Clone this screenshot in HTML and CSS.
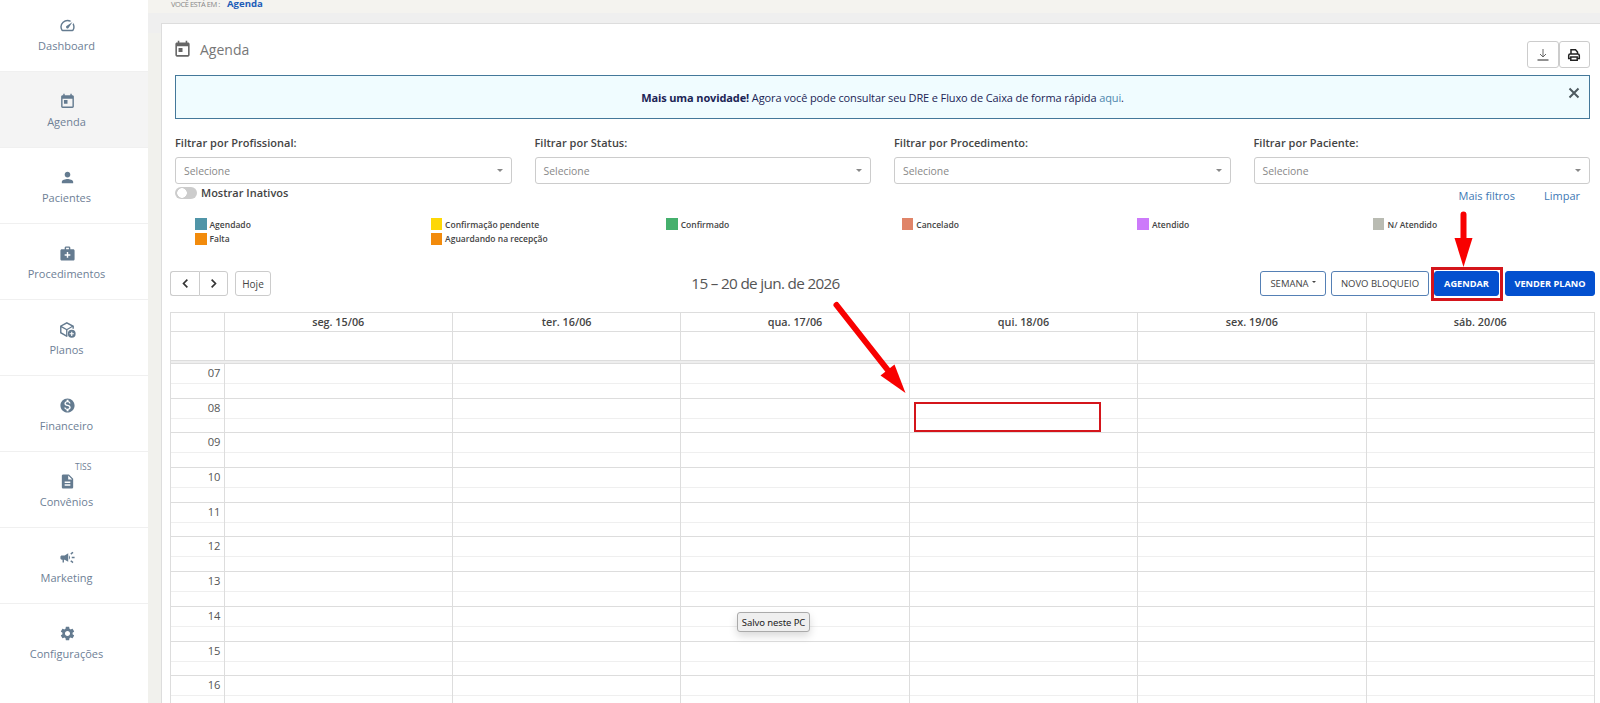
FILE: index.html
```
<!DOCTYPE html>
<html lang="pt-BR">
<head>
    <meta charset="UTF-8">
    <meta name="viewport" content="width=device-width, initial-scale=1.0">
    <title>Agenda</title>
    <link rel="stylesheet" href="styles.css">
</head>
<body>
<nav class="sidebar">
    <a class="nav-item">
        <svg viewBox="0 0 24 24"><path d="M20.38 8.57l-1.23 1.85a8 8 0 0 1-.22 7.58H5.07A8 8 0 0 1 15.58 6.85l1.85-1.23A10 10 0 0 0 3.35 19a2 2 0 0 0 1.72 1h13.85a2 2 0 0 0 1.74-1 10 10 0 0 0-.27-10.44zm-9.79 6.84a2 2 0 0 0 2.83 0l5.66-8.49-8.49 5.66a2 2 0 0 0 0 2.83z"/></svg>
        <span>Dashboard</span>
    </a>
    <a class="nav-item active">
        <svg viewBox="0 0 24 24"><path d="M19 3h-1V1h-2v2H8V1H6v2H5c-1.1 0-2 .9-2 2v14c0 1.1.9 2 2 2h14c1.1 0 2-.9 2-2V5c0-1.1-.9-2-2-2zm0 16H5V8h14v11zM7 10h5v5H7z"/></svg>
        <span>Agenda</span>
    </a>
    <a class="nav-item">
        <svg viewBox="0 0 24 24"><path d="M12 12c2.21 0 4-1.79 4-4s-1.79-4-4-4-4 1.79-4 4 1.79 4 4 4zm0 2c-2.67 0-8 1.34-8 4v2h16v-2c0-2.66-5.33-4-8-4z"/></svg>
        <span>Pacientes</span>
    </a>
    <a class="nav-item">
        <svg viewBox="0 0 24 24"><path d="M20 6h-4V4c0-1.1-.9-2-2-2h-4c-1.1 0-2 .9-2 2v2H4c-1.1 0-2 .9-2 2v12c0 1.1.9 2 2 2h16c1.1 0 2-.9 2-2V8c0-1.1-.9-2-2-2zM10 4h4v2h-4V4zm6 11h-3v3h-2v-3H8v-2h3v-3h2v3h3v2z"/></svg>
        <span>Procedimentos</span>
    </a>
    <a class="nav-item">
        <svg viewBox="0 0 24 24"><path d="M11 1.5 1.5 6.8v10.4L11 22.5l1-.6v-2.3l-.1.1V12.600L19 8.600V11h2V6.800zM11 3.800 17.700 7.500 11 11.200 4.200 7.500zM3.500 9.200l6.500 3.600v6.800L3.500 16z"/><path fill-rule="evenodd" d="M18 12.500a5.500 5.500 0 1 0 0 11 5.500 5.500 0 0 0 0-11zm-.8 2.500h1.600v2.200H21v1.600h-2.200V21h-1.600v-2.200H15v-1.600h2.200z"/></svg>
        <span>Planos</span>
    </a>
    <a class="nav-item">
        <svg viewBox="0 0 24 24"><path d="M12 2C6.480 2 2 6.480 2 12s4.480 10 10 10 10-4.480 10-10S17.520 2 12 2zm1.410 16.090V20h-2.670v-1.930c-1.710-.36-3.160-1.460-3.270-3.400h1.960c.1 1.050.82 1.870 2.650 1.870 1.960 0 2.400-.98 2.400-1.590 0-.83-.44-1.610-2.670-2.140-2.480-.6-4.180-1.620-4.180-3.670 0-1.720 1.390-2.840 3.110-3.210V4h2.670v1.950c1.860.45 2.790 1.860 2.850 3.390H14.300c-.05-1.110-.64-1.870-2.220-1.870-1.500 0-2.400.68-2.400 1.640 0 .84.65 1.390 2.670 1.910s4.180 1.390 4.180 3.910c-.01 1.830-1.380 2.830-3.120 3.160z"/></svg>
        <span>Financeiro</span>
    </a>
    <a class="nav-item">
        <small class="tiss">TISS</small>
        <svg viewBox="0 0 24 24"><path d="M14 2H6c-1.100 0-2 .9-2 2v16c0 1.100.9 2 2 2h12c1.100 0 2-.9 2-2V8l-6-6zm2 16H8v-2h8v2zm0-4H8v-2h8v2zm-3-5V3.500L18.500 9H13z"/></svg>
        <span>Convênios</span>
    </a>
    <a class="nav-item">
        <svg viewBox="0 0 24 24"><path d="M18 11v2h4v-2h-4zm-2 6.610c.96.71 2.210 1.650 3.200 2.390.4-.53.8-1.070 1.200-1.600-.99-.74-2.240-1.680-3.200-2.400-.4.540-.8 1.080-1.200 1.610zM20.400 5.600c-.4-.53-.8-1.070-1.200-1.600-.99.740-2.240 1.680-3.200 2.400.4.530.8 1.070 1.200 1.600.96-.72 2.210-1.650 3.200-2.400zM4 9c-1.100 0-2 .9-2 2v2c0 1.100.9 2 2 2h1v4h2v-4h1l5 3V6L8 9H4zm11.500 3c0-1.330-.58-2.530-1.500-3.350v6.690c.92-.81 1.500-2.010 1.500-3.340z"/></svg>
        <span>Marketing</span>
    </a>
    <a class="nav-item">
        <svg viewBox="0 0 24 24"><path d="M19.140 12.940c.04-.3.060-.61.060-.94 0-.32-.02-.64-.07-.94l2.030-1.580c.18-.14.230-.41.120-.61l-1.920-3.320c-.12-.22-.37-.29-.59-.22l-2.390.96c-.5-.38-1.030-.7-1.620-.94l-.36-2.540c-.04-.24-.24-.41-.48-.41h-3.840c-.24 0-.43.17-.47.41l-.36 2.540c-.59.24-1.130.57-1.620.94l-2.390-.96c-.22-.08-.47 0-.59.22L2.740 8.870c-.12.21-.08.47.12.61l2.030 1.580c-.05.3-.09.63-.09.94s.02.64.07.94l-2.030 1.580c-.18.14-.23.41-.12.61l1.920 3.320c.12.22.37.29.59.22l2.390-.96c.5.38 1.030.7 1.620.94l.36 2.540c.05.24.24.41.48.41h3.840c.24 0 .44-.17.47-.41l.36-2.540c.59-.24 1.130-.56 1.620-.94l2.390.96c.22.08.47 0 .59-.22l1.920-3.320c.12-.22.070-.47-.12-.61l-2.010-1.580zM12 15.600c-1.980 0-3.600-1.620-3.600-3.600s1.620-3.600 3.600-3.600 3.600 1.620 3.600 3.600-1.620 3.600-3.600 3.600z"/></svg>
        <span>Configurações</span>
    </a>
</nav>

<main class="content">
    <div class="breadcrumb"><span>VOCÊ ESTÁ EM :</span><a>Agenda</a></div>

    <section class="panel">
        <header class="panel-header">
            <svg class="title-icon" viewBox="0 0 24 24"><path d="M19 3h-1V1h-2v2H8V1H6v2H5c-1.100 0-2 .9-2 2v14c0 1.100.9 2 2 2h14c1.100 0 2-.9 2-2V5c0-1.100-.9-2-2-2zm0 16H5V8h14v11zM7 10h5v5H7z"/></svg>
            <h1>Agenda</h1>
            <div class="header-actions">
                <button class="icon-btn"><svg viewBox="0 0 14 14" fill="none" stroke="#666"><path d="M7 1v8M4 6l3 3 3-3"/><path d="M1.500 12h11" stroke="#222"/></svg></button>
                <button class="icon-btn"><svg viewBox="0 0 14 14" fill="none" stroke="#222" stroke-width="1.500"><path d="M4 6V1.800h4.500L10.500 4v2M3.500 10.500H1.700V7.500q0-1.500 1.500-1.500h7.600q1.500 0 1.500 1.500v3h-1.800"/><path d="M3.800 9h6.400v3.300H3.800z"/></svg></button>
            </div>
        </header>

        <div class="alert">
            <p><b>Mais uma novidade!</b> Agora você pode consultar seu DRE e Fluxo de Caixa de forma rápida <a>aqui</a>.</p>
            <svg class="close" viewBox="0 0 12 12"><path d="M1.500 1.500l9 9M10.500 1.500l-9 9"/></svg>
        </div>

        <div class="filters">
            <div class="filter"><label>Filtrar por Profissional:</label><div class="select">Selecione</div></div>
            <div class="filter"><label>Filtrar por Status:</label><div class="select">Selecione</div></div>
            <div class="filter"><label>Filtrar por Procedimento:</label><div class="select">Selecione</div></div>
            <div class="filter"><label>Filtrar por Paciente:</label><div class="select">Selecione</div></div>
        </div>

        <div class="filter-options">
            <span class="toggle"></span>
            <label>Mostrar Inativos</label>
            <div class="links"><a>Mais filtros</a><a>Limpar</a></div>
        </div>

        <ul class="legend">
            <li><i class="agendado"></i>Agendado</li>
            <li><i class="pendente"></i>Confirmação pendente</li>
            <li><i class="confirmado"></i>Confirmado</li>
            <li><i class="cancelado"></i>Cancelado</li>
            <li><i class="atendido"></i>Atendido</li>
            <li><i class="nao-atendido"></i>N/ Atendido</li>
            <li><i class="falta"></i>Falta</li>
            <li><i class="falta"></i>Aguardando na recepção</li>
        </ul>

        <div class="toolbar">
            <div class="toolbar-left">
                <div class="pager">
                    <button><svg viewBox="0 0 10 10"><path d="M6.700 1.500L3.200 5l3.500 3.500"/></svg></button>
                    <button><svg viewBox="0 0 10 10"><path d="M3.300 1.500L6.800 5 3.300 8.500"/></svg></button>
                </div>
                <button class="today">Hoje</button>
            </div>
            <h2>15 – 20 de jun. de 2026</h2>
            <div class="toolbar-right">
                <button class="btn semana">SEMANA <span class="caret"></span></button>
                <button class="btn bloqueio">NOVO BLOQUEIO</button>
                <button class="btn primary agendar">AGENDAR</button>
                <button class="btn primary vender">VENDER PLANO</button>
            </div>
        </div>

        <div class="calendar">
            <div class="cal-row days">
                <div></div><div>seg. 15/06</div><div>ter. 16/06</div><div>qua. 17/06</div><div>qui. 18/06</div><div>sex. 19/06</div><div>sáb. 20/06</div>
            </div>
            <div class="cal-row all-day">
                <div></div><div></div><div></div><div></div><div></div><div></div><div></div>
            </div>
            <div class="divider"></div>
            <div id="hours"></div>
        </div>
    </section>
</main>

<div class="highlight highlight-btn"></div>
<div class="highlight highlight-slot"></div>
<svg class="arrows" viewBox="0 0 1600 703">
    <path d="M1463.500 214.500V242M836.500 305l52 66"/>
    <polygon points="1454.500,238 1472.500,238 1463.500,267"/>
    <polygon points="905.500,393 880.500,375.500 894.500,364.500"/>
</svg>
<div class="tooltip">Salvo neste PC</div>

<script>
    const hours = document.getElementById('hours');
    for (let h = 7; h <= 16; h++) {
        const label = String(h).padStart(2, '0');
        hours.innerHTML += `<div class="cal-row hour"><div>${label}</div>${'<div></div>'.repeat(6)}</div>`;
    }
</script>
</body>
</html>
```
FILE: styles.css
```
* {
    box-sizing: border-box;
}
body {
    margin: 0;
    height: 703px;
    display: flex;
    overflow: hidden;
    position: relative;
    font-family: 'Open Sans', sans-serif;
    font-size: 11px;
    color: #444;
    background: #f1f1ed;
}
button {
    font-family: inherit;
    padding: 0;
    background: #fff;
    border: 1px solid #ccc;
    border-radius: 3px;
    display: flex;
    align-items: center;
    justify-content: center;
}
.sidebar {
    width: 148px;
    flex: none;
    margin-top: -4px;
    background: #fff;
}
.nav-item {
    height: 76px;
    padding: 21px 15px 0 0;
    display: flex;
    flex-direction: column;
    align-items: center;
    border-bottom: 1px solid #f0f0f0;
    color: #6e8096;
    position: relative;
}
.nav-item:last-child {
    border: none;
}
.nav-item.active {
    background: #f4f4f4;
}
.nav-item svg {
    width: 17px;
    height: 17px;
    margin-left: 2px;
    fill: #647b90;
}
.nav-item span {
    line-height: 16px;
    margin-top: 4px;
}
.tiss {
    position: absolute;
    left: 75px;
    top: 9px;
    font-size: 8.500px;
    line-height: 12px;
}
.content {
    flex: 1;
    min-width: 0;
    background: linear-gradient(#f4f3ef 13px, #efefef 13px, #efefef 33px, #f1f1ed 33px);
}
.breadcrumb {
    height: 23px;
    padding-left: 23px;
    display: flex;
    line-height: 8px;
}
.breadcrumb span {
    font-size: 7.500px;
    width: 56px;
    color: #888;
    letter-spacing: -0.450px;
}
.breadcrumb a {
    font-size: 9.600px;
    font-weight: bold;
    color: #1d5db8;
}
.panel {
    margin: 0 0 0 13px;
    height: 690px;
    background: #fff;
    border: 1px solid #ddd;
    border-right: none;
}
.panel-header {
    display: flex;
    align-items: flex-start;
    height: 51px;
    padding: 17px 10px 0 11px;
}
.title-icon {
    width: 19px;
    height: 19px;
    margin-top: -1px;
    fill: #666;
}
.panel-header h1 {
    margin: -1px 0 0 8px;
    font-size: 14px;
    line-height: 20px;
    font-weight: normal;
    color: #777;
}
.header-actions {
    display: flex;
    margin-left: auto;
}
.icon-btn {
    width: 31.500px;
    height: 27px;
}
.icon-btn svg {
    width: 14px;
    height: 14px;
}
.alert {
    height: 44px;
    margin: 0 10px 0 13px;
    display: flex;
    align-items: center;
    background: #f0fcff;
    border: 1px solid #44789a;
    color: #1b2455;
    position: relative;
}
.alert p {
    margin: 0 auto;
    letter-spacing: -0.120px;
}
.alert a {
    color: #4d87ae;
}
.close {
    position: absolute;
    right: 9px;
    top: 11px;
    width: 12px;
    height: 12px;
    stroke: #4e5a60;
    stroke-width: 2;
}
.filters {
    display: grid;
    grid-template-columns: repeat(4, 1fr);
    gap: 23px;
    margin: 15px 10px 0 13px;
}
.filter label, .filter-options label {
    display: block;
    font-weight: 600;
    line-height: 18px;
}
.select {
    height: 27px;
    margin-top: 5px;
    padding: 0 8px;
    border: 1px solid #ccc;
    border-radius: 3px;
    display: flex;
    align-items: center;
    justify-content: space-between;
    font-size: 10.400px;
    color: #888;
}
.select::after {
    content: "";
    border: 3.500px solid transparent;
    border-top-color: #888;
    border-bottom: none;
}
.filter-options {
    display: flex;
    align-items: flex-start;
    height: 33px;
    padding: 0 20px 0 13px;
}
.toggle {
    width: 22px;
    height: 12px;
    margin: 3px 4px 0 0;
    border-radius: 6px;
    background: radial-gradient(circle at 7px 6px, #fff 4.500px, #ccc 5px);
}
.links {
    margin: 3px 0 0 auto;
    display: flex;
    gap: 29px;
    line-height: 18px;
    color: #3e78b4;
}
.legend {
    list-style: none;
    margin: 0;
    padding: 0 0 0 33px;
    display: grid;
    grid-template-columns: repeat(6, 235.600px);
    grid-auto-rows: 14.500px;
    height: 54px;
    font-size: 8.500px;
    font-weight: 600;
}
.legend li {
    display: flex;
    align-items: center;
    white-space: nowrap;
}
.legend i {
    width: 11.500px;
    height: 12px;
    margin-right: 3px;
}
.agendado { background: #5095a8; }
.pendente { background: #fdd706; }
.confirmado { background: #45b06d; }
.cancelado { background: #e08468; }
.atendido { background: #cc7afa; }
.nao-atendido { background: #b9bbb2; }
.falta { background: #f28b0c; }
.toolbar {
    height: 41px;
    margin: 0 5px 0 8px;
    display: flex;
    justify-content: space-between;
    align-items: flex-start;
}
.toolbar-left, .toolbar-right {
    display: flex;
}
.pager {
    display: flex;
    margin-right: 7px;
}
.pager button {
    width: 29px;
    height: 25px;
}
.pager button:first-child {
    border-right: none;
    border-radius: 3px 0 0 3px;
}
.pager button:last-child {
    border-radius: 0 3px 3px 0;
}
.pager svg {
    width: 11px;
    height: 11px;
    fill: none;
    stroke: #333;
    stroke-width: 1.500;
}
.today {
    width: 36px;
    height: 25px;
    font-size: 10px;
    color: #444;
}
.toolbar h2 {
    margin: 0;
    font-size: 15.300px;
    line-height: 25px;
    font-weight: normal;
    letter-spacing: -0.680px;
    color: #555;
}
.btn {
    height: 25px;
    border-color: #5580b5;
    font-size: 9.500px;
    color: #444;
    white-space: nowrap;
}
.primary {
    background: #0450cf;
    border-color: #0450cf;
    font-size: 9.200px;
    font-weight: bold;
    color: #fff;
}
.semana { width: 66px; margin-right: 5px; }
.bloqueio { width: 98px; margin-right: 5px; }
.agendar { width: 65px; margin-right: 6px; }
.vender { width: 90px; }
.caret {
    border: 2.500px solid transparent;
    border-top-color: #444;
    border-bottom: none;
    margin: -3px 0 0 3px;
}
.calendar {
    margin: 0 5px 0 8px;
    border: 1px solid #ddd;
}
.cal-row {
    display: grid;
    grid-template-columns: 52.500px repeat(6, 1fr);
}
.cal-row > div + div {
    border-left: 1px solid #ddd;
}
.days {
    height: 19px;
    border-bottom: 1px solid #ddd;
    font-size: 10.800px;
    font-weight: 600;
    line-height: 17px;
    text-align: center;
}
.all-day {
    height: 28px;
}
.divider {
    height: 4px;
    background: #eee;
    border: 1px solid #ddd;
    border-width: 1px 0;
}
.hour {
    height: 34.700px;
    border-bottom: 1px solid #ddd;
}
.hour > div {
    background: linear-gradient(#efefef, #efefef) 0 19px / 100% 1px no-repeat;
}
.hour > div:first-child {
    text-align: right;
    padding-right: 3px;
    font-size: 11.200px;
    line-height: 18px;
    color: #555;
}
/* annotations over the page */
.highlight {
    position: absolute;
    border: 2px solid #d4151b;
}
.highlight-btn {
    left: 1431px;
    top: 267px;
    width: 72px;
    height: 34px;
    border-width: 3px;
}
.highlight-slot {
    left: 914px;
    top: 402px;
    width: 187px;
    height: 30px;
}
.arrows {
    position: absolute;
    left: 0;
    top: 0;
    width: 1600px;
    height: 703px;
    fill: #f80000;
}
.arrows path {
    fill: none;
    stroke: #f80000;
    stroke-width: 6;
    stroke-linecap: round;
}
.tooltip {
    position: absolute;
    left: 737px;
    top: 612px;
    width: 73px;
    height: 20px;
    border: 1px solid #aaa;
    border-radius: 3px;
    background: #efefef;
    box-shadow: 0 4px 8px rgba(0, 0, 0, 0.15);
    font-family: 'Noto Sans', sans-serif;
    font-size: 9.500px;
    line-height: 19px;
    letter-spacing: -0.100px;
    text-align: center;
    color: #222;
    white-space: nowrap;
}
```
